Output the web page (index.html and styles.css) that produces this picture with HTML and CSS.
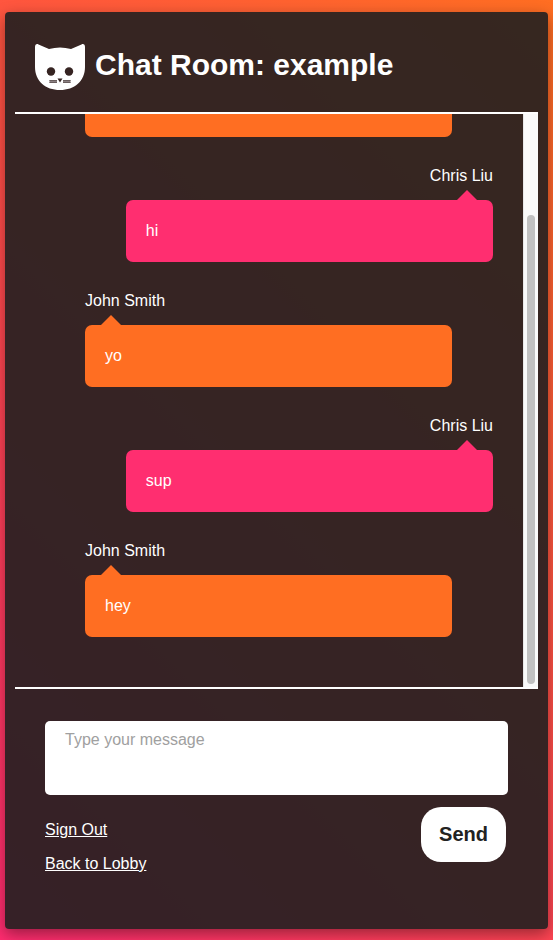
FILE: index.html
```html
<!DOCTYPE html>
<html lang="en">
<head>
<meta charset="utf-8">
<meta name="viewport" content="width=device-width, initial-scale=1">
<title>Chat Room: example</title>
<link rel="stylesheet" href="styles.css">
</head>
<body>
<main class="panel">
  <header class="header">
    <svg class="logo" viewBox="0 0 50 46" aria-hidden="true">
      <path fill="#fff" d="M0 3C0 .5 1.500-.4 3.500.4L14 5Q25 1.800 36 5L46.500.4C48.500-.4 50 .5 50 3V23C50 37 39.500 46 25 46S0 37 0 23Z"/>
      <g fill="#362422">
        <circle cx="16" cy="27.500" r="4.200"/>
        <circle cx="34" cy="27.500" r="4.200"/>
        <path d="M22.500 34.500H27.500L25 38.500Z"/>
      </g>
      <path stroke="#8b8082" stroke-width="3" d="M14.500 37.500H22M28 37.500H35.500"/>
      <path stroke="#6a5e5e" stroke-width="1" d="M14.500 36.500H22M14.500 38.500H22M28 36.500H35.500M28 38.500H35.500"/>
    </svg>
    <h1 class="title">Chat Room: example</h1>
  </header>
  <section class="history" aria-label="Messages">
    <ul class="messages">
      <li class="message theirs"><p class="bubble"></p></li>
      <li class="message mine"><span class="name">Chris Liu</span><p class="bubble">hi</p></li>
      <li class="message theirs"><span class="name">John Smith</span><p class="bubble">yo</p></li>
      <li class="message mine"><span class="name">Chris Liu</span><p class="bubble">sup</p></li>
      <li class="message theirs"><span class="name">John Smith</span><p class="bubble">hey</p></li>
    </ul>
    <div class="track" aria-hidden="true"><div class="thumb"></div></div>
  </section>
  <form class="composer">
    <textarea class="input" aria-label="Message" placeholder="Type your message"></textarea>
    <div class="actions">
      <nav class="links">
        <a href="#signout">Sign Out</a>
        <a href="#lobby">Back to Lobby</a>
      </nav>
      <button class="send" type="button">Send</button>
    </div>
  </form>
</main>
</body>
</html>
```
FILE: styles.css
```css
* {
  box-sizing: border-box;
}

body {
  display: flex;
  min-height: 100vh;
  margin: 0;
  padding: 12px 5px 11px;
  background: linear-gradient(45deg, #ff2c70, #ff6e22);
  color: #fff;
  font: 16px/22px "Liberation Sans", Arial, sans-serif;
}

.panel {
  display: flex;
  flex: 1;
  flex-direction: column;
  min-width: 0;
  padding: 0 10px;
  border-radius: 4px;
  background: rgba(34, 32, 32, 0.91);
  box-shadow: 0 5px 15px rgba(0, 0, 0, 0.4);
}

.header {
  display: flex;
  align-items: center;
  gap: 10px;
  height: 100px;
  padding: 10px 20px 0;
}

.logo {
  width: 50px;
  height: 46px;
}

.title {
  margin: 0 0 4px;
  font-size: 30px;
  line-height: 36px;
}

.history {
  display: flex;
  flex: 1;
  min-height: 0;
  border-top: 2px solid #fff;
  border-bottom: 2px solid #fff;
}

.messages {
  display: flex;
  flex: 1 1 0;
  flex-direction: column;
  justify-content: flex-end;
  gap: 28px;
  height: 573px;
  margin: 0;
  padding: 0 30px 50px 70px;
  overflow: hidden;
  list-style: none;
}

.message {
  display: flex;
  flex-direction: column;
  gap: 13px;
}

.mine {
  align-items: flex-end;
}

.bubble {
  position: relative;
  width: 90%;
  min-height: 62px;
  margin: 0;
  padding: 20px;
  border-radius: 7px;
  background: #ff6e22;
}

.mine .bubble {
  background: #ff2e70;
}

.bubble::before {
  position: absolute;
  bottom: 100%;
  left: 16px;
  border: 10px solid transparent;
  border-top-width: 0;
  border-bottom-color: #ff6e22;
  content: "";
}

.mine .bubble::before {
  right: 16px;
  left: auto;
  border-bottom-color: #ff2e70;
}

.track {
  display: flex;
  width: 15px;
  padding: 101px 3px 3px;
  border-left: 1px solid #e8e8e8;
  background: #fafafa;
}

.thumb {
  width: 8px;
  border-radius: 4px;
  background: #c1c1c1;
}

.composer {
  padding: 32px 30px 54px;
}

.input {
  display: block;
  width: 100%;
  height: 74px;
  padding: 8px 20px;
  border: 0;
  border-radius: 5px;
  background: #fff;
  color: #222;
  font: inherit;
  resize: none;
}

.input::placeholder {
  color: #a0a0a0;
}

.actions {
  display: flex;
  align-items: flex-start;
  justify-content: space-between;
  padding: 12px 2px 0 0;
}

.links {
  display: flex;
  flex-direction: column;
  align-items: flex-start;
  gap: 12px;
  padding-top: 12px;
}

.links a {
  color: #fff;
}

.send {
  height: 55px;
  padding: 0 18px 2px;
  border: 0;
  border-radius: 20px;
  background: #fff;
  color: #222;
  font: bold 20px/22px "Liberation Sans", Arial, sans-serif;
}
```
